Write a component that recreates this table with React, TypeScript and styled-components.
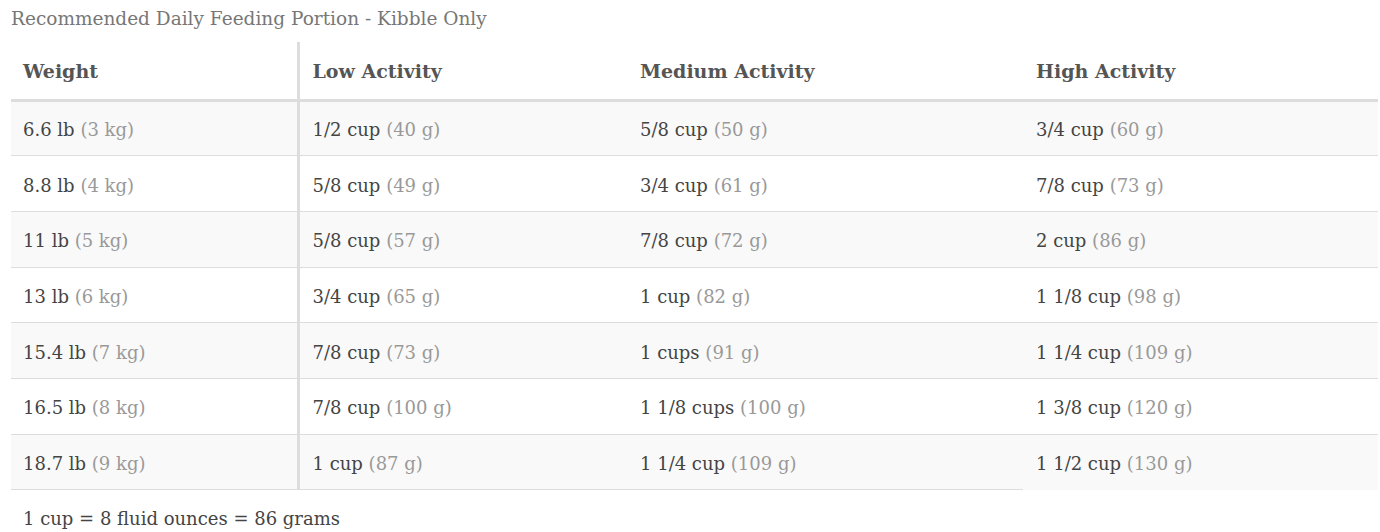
import React from "react";
import styled, { createGlobalStyle } from "styled-components";

const Global = createGlobalStyle`
  html, body { margin: 0; padding: 0; background: #fff; }
  body { font-family: Georgia, "DejaVu Serif", "Liberation Serif", serif; }
`;

const Page = styled.div`
  padding: 6px 4px 0 11px;
  width: 1367px;
  box-sizing: border-box;
  color: #444;
`;

const Caption = styled.div`
  font-size: 18.5px;
  color: #777;
  line-height: 26px;
  height: 36px;
`;

const Table = styled.table`
  width: 100%;
  border-collapse: collapse;
  table-layout: fixed;
`;

const HeadCell = styled.th<{ $w: number; $divider?: boolean }>`
  width: ${(p) => p.$w}px;
  text-align: left;
  font-weight: bold;
  font-size: 19px;
  color: #555;
  height: 58px;
  padding: 2px 0 0 ${(p) => (p.$divider ? 12 : 13)}px;
  box-sizing: border-box;
  border-bottom: 3px solid #ddd;
  border-right: ${(p) => (p.$divider ? "3px solid #ddd" : "none")};
  vertical-align: middle;
`;

const Row = styled.tr<{ $shade: boolean }>`
  background: ${(p) => (p.$shade ? "#f9f9f9" : "#fff")};
`;

const Cell = styled.td<{ $divider?: boolean; $noBorder?: boolean }>`
  font-size: 18px;
  color: #444;
  height: 55.7px;
  padding: 3px 0 0 ${(p) => (p.$divider ? 12 : 13)}px;
  box-sizing: border-box;
  border-bottom: ${(p) => (p.$noBorder ? "none" : "1px solid #ddd")};
  border-right: ${(p) => (p.$divider ? "3px solid #ddd" : "none")};
  vertical-align: middle;
`;

const Muted = styled.span`
  color: #999;
`;

const Note = styled.div`
  font-size: 18px;
  color: #444;
  margin-top: 18px;
  padding-left: 12px;
`;

const rows: [string, string][][] = [
  [["6.6 lb", "3 kg"], ["1/2 cup", "40 g"], ["5/8 cup", "50 g"], ["3/4 cup", "60 g"]],
  [["8.8 lb", "4 kg"], ["5/8 cup", "49 g"], ["3/4 cup", "61 g"], ["7/8 cup", "73 g"]],
  [["11 lb", "5 kg"], ["5/8 cup", "57 g"], ["7/8 cup", "72 g"], ["2 cup", "86 g"]],
  [["13 lb", "6 kg"], ["3/4 cup", "65 g"], ["1 cup", "82 g"], ["1 1/8 cup", "98 g"]],
  [["15.4 lb", "7 kg"], ["7/8 cup", "73 g"], ["1 cups", "91 g"], ["1 1/4 cup", "109 g"]],
  [["16.5 lb", "8 kg"], ["7/8 cup", "100 g"], ["1 1/8 cups", "100 g"], ["1 3/8 cup", "120 g"]],
  [["18.7 lb", "9 kg"], ["1 cup", "87 g"], ["1 1/4 cup", "109 g"], ["1 1/2 cup", "130 g"]],
];

const heads = ["Weight", "Low Activity", "Medium Activity", "High Activity"];
const widths = [287, 329, 396, 355];

export default function App() {
  return (
    <>
      <Global />
      <Page>
        <Caption>Recommended Daily Feeding Portion - Kibble Only</Caption>
        <Table>
          <thead>
            <tr>
              {heads.map((h, i) => (
                <HeadCell key={h} $w={widths[i]} $divider={i === 0}>
                  {h}
                </HeadCell>
              ))}
            </tr>
          </thead>
          <tbody>
            {rows.map((r, ri) => (
              <Row key={ri} $shade={ri % 2 === 0}>
                {r.map(([a, b], ci) => (
                  <Cell
                    key={ci}
                    $divider={ci === 0}
                    $noBorder={ri === rows.length - 1 && ci === 3}
                  >
                    {a} <Muted>({b})</Muted>
                  </Cell>
                ))}
              </Row>
            ))}
          </tbody>
        </Table>
        <Note>1 cup = 8 fluid ounces = 86 grams</Note>
      </Page>
    </>
  );
}
